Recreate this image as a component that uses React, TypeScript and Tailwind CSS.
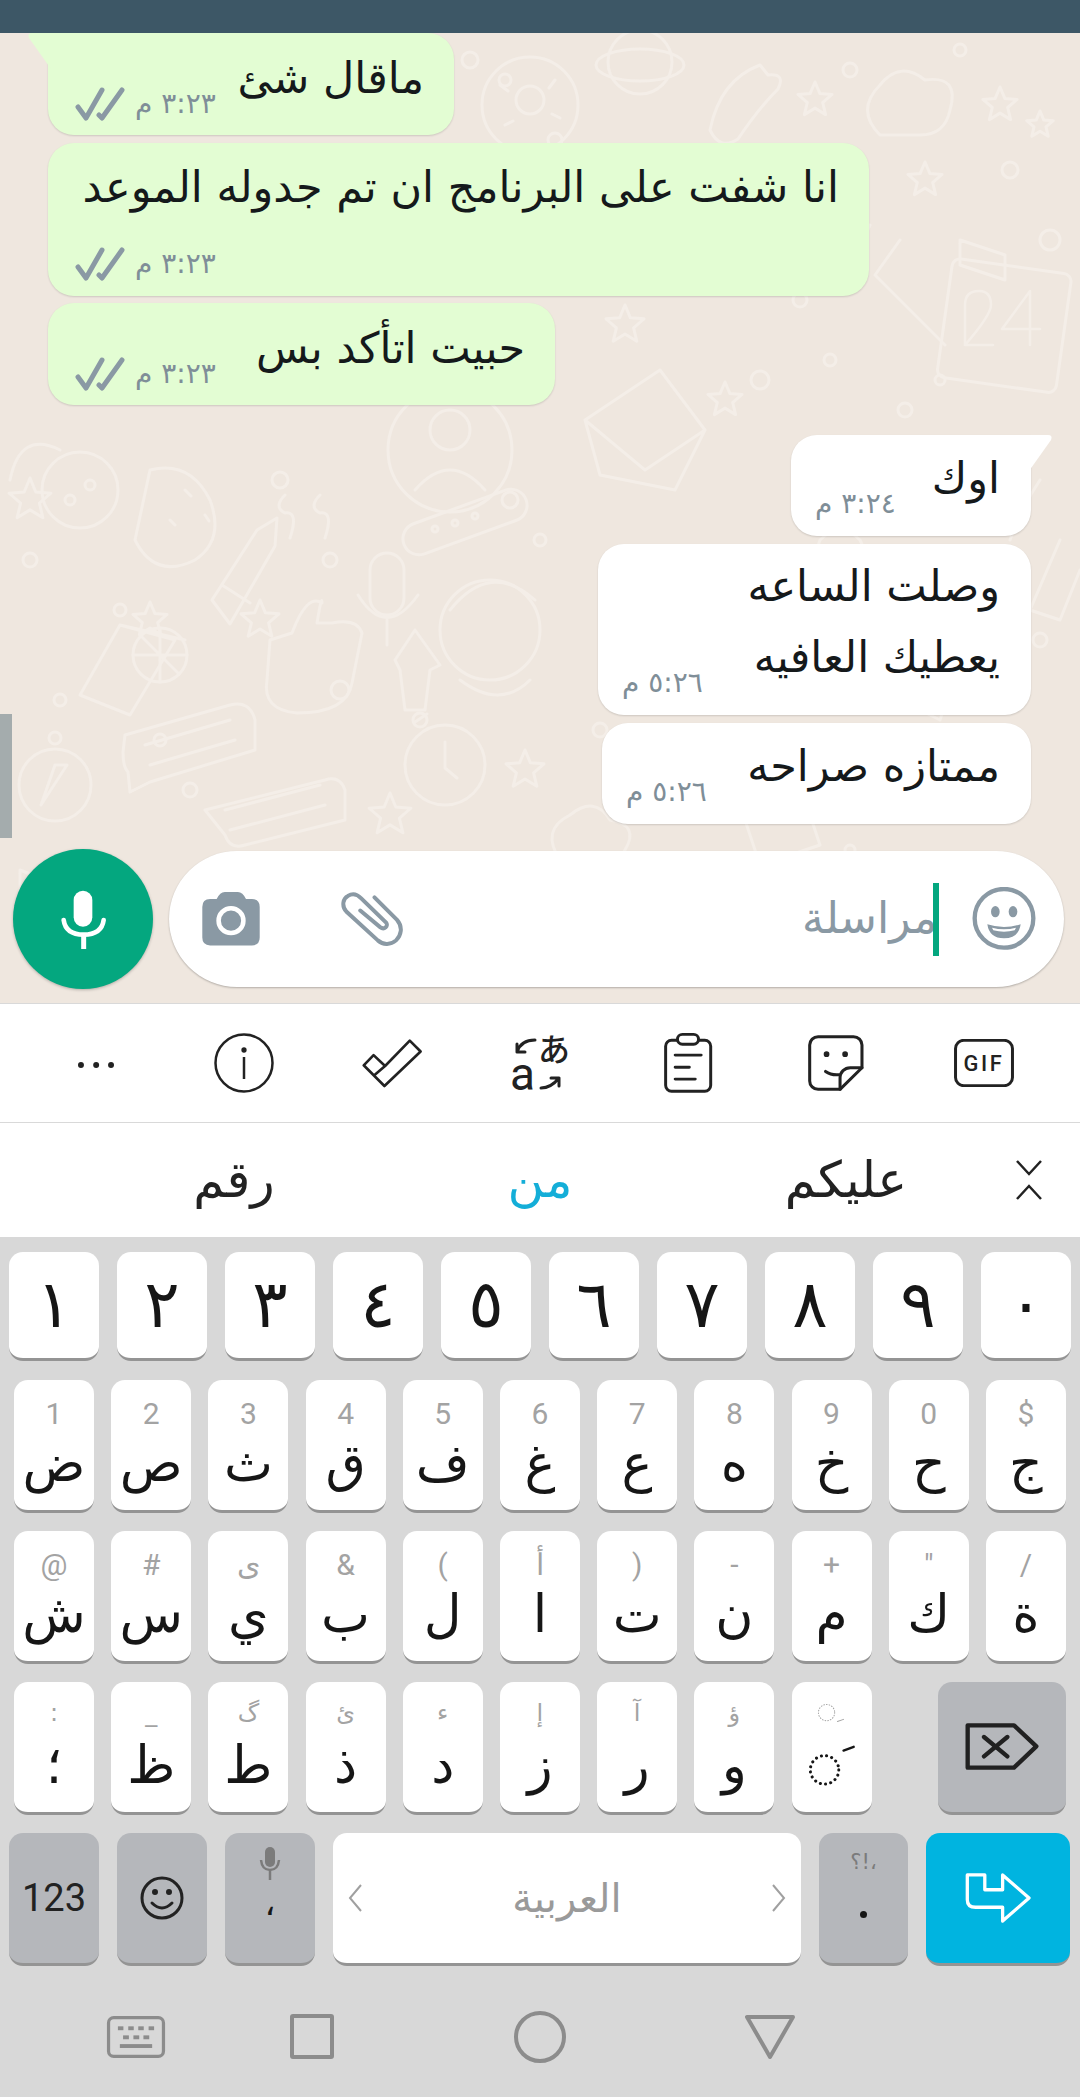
import React from 'react';

const arabic = "font-['DejaVu_Sans',sans-serif]";

// faint doodles behind the chat
const bubbles: [number, number, number][] = [
  [470, 60, 8], [505, 80, 6], [610, 200, 10], [690, 175, 7], [710, 220, 9], [665, 250, 6], [850, 70, 7], [960, 50, 6],
  [1010, 170, 8], [1050, 240, 10], [800, 300, 7], [830, 360, 6], [760, 380, 9], [905, 410, 7], [940, 380, 5], [555, 140, 7],
  [280, 480, 8], [330, 560, 7], [510, 500, 8], [540, 540, 6], [700, 560, 8], [735, 640, 9], [770, 660, 6], [420, 720, 7],
  [340, 690, 9], [160, 740, 6], [190, 790, 7], [120, 610, 6], [30, 560, 7], [60, 700, 6], [560, 880, 5], [600, 730, 7],
  [640, 800, 8], [680, 750, 6], [230, 900, 6], [850, 850, 5], [510, 900, 7], [90, 960, 6], [290, 950, 6], [1040, 640, 7],
];
const stars: [number, number, number][] = [
  [815, 100, 18], [1000, 105, 18], [925, 180, 18], [625, 325, 20], [150, 620, 18], [260, 620, 20], [525, 770, 20], [390, 815, 22], [725, 400, 18], [30, 500, 22], [1040, 125, 14],
];

function starPath(x: number, y: number, r: number) {
  const pts: string[] = [];
  for (let i = 0; i < 10; i++) {
    const a = (Math.PI / 5) * i - Math.PI / 2;
    const rr = i % 2 ? r * 0.45 : r;
    pts.push(`${(x + rr * Math.cos(a)).toFixed(1)},${(y + rr * Math.sin(a)).toFixed(1)}`);
  }
  return pts.join(' ');
}

const Doodles = () => (
  <svg className="absolute inset-0 w-full h-full" viewBox="0 33 1080 970" fill="none" stroke="#f4eee8" strokeWidth="3" strokeLinecap="round" strokeLinejoin="round">
    {bubbles.map(([x, y, r], i) => <circle key={i} cx={x} cy={y} r={r} />)}
    {stars.map(([x, y, r], i) => <polygon key={i} points={starPath(x, y, r)} />)}
    {/* planet */}
    <circle cx="640" cy="62" r="32" />
    <ellipse cx="640" cy="65" rx="44" ry="16" />
    {/* donut */}
    <circle cx="530" cy="105" r="48" />
    <circle cx="530" cy="100" r="14" />
    <path d="M500 85l8 6M555 80l-6 8M560 118l-8-4M505 125l8-4" />
    {/* hand, cloud */}
    <path d="M710 130q10-50 50-65l8 10q18-2 10 14q-20 20-40 50q-18 12-28-9z" />
    <path d="M880 135q-25-25 0-50q20-25 45-5q35-5 25 30q-5 25-30 25z" />
    {/* banana and drops */}
    <path d="M850 220q-15 30-20 60M870 225q-15 30-20 60" />
    {/* calendar 24 */}
    <rect x="945" y="265" width="120" height="120" rx="8" transform="rotate(8 1000 320)" />
    <path d="M965 345v-40q0-14 14-14q12 0 12 14q0 10-26 40h28M1030 345v-54l-28 38h38" strokeWidth="2.5" />
    <path d="M960 240l45 15v25l-45-15zM900 240l-25 35 70 70" />
    {/* envelope */}
    <path d="M585 420l75-50 45 60-30 60-75-15zM585 420l60 50 60-40" />
    {/* profile disc */}
    <circle cx="450" cy="450" r="62" />
    <circle cx="450" cy="430" r="20" />
    <path d="M415 490q35-40 70 0" />
    {/* cookie, bear */}
    <circle cx="80" cy="490" r="38" />
    <path d="M10 480q10-50 50-30M150 470q40-10 60 30q15 40-15 60q-40 20-60-20z" />
    <path d="M185 490l6 6M205 515l4 6M170 520l5 5" />
    <circle cx="90" cy="485" r="5" />
    <circle cx="70" cy="500" r="5" />
    {/* quotes */}
    <path d="M285 495q-12 12 0 18q14-2 5 25M320 495q-12 12 0 18q14-2 5 25" />
    {/* pill */}
    <rect x="400" y="506" width="130" height="32" rx="16" transform="rotate(-20 465 522)" />
    <circle cx="435" cy="529" r="3" />
    <circle cx="455" cy="523" r="3" />
    <circle cx="475" cy="516" r="3" />
    {/* pencil */}
    <path d="M212 600l45-70 20-12-2 28-45 78zM222 585l28 18" />
    {/* mic */}
    <rect x="370" y="553" width="34" height="62" rx="17" />
    <path d="M358 595q28 45 60 0M387 620v25" />
    {/* thumb */}
    <path d="M270 640l-3 40q-5 30 30 33q50 0 55-30l10-50q-5-15-30-10l-15 0q5-30 5-20q-15-10-30 30z" />
    {/* face */}
    <circle cx="490" cy="630" r="50" />
    <path d="M450 610q40-50 85-10M460 680q40 30 70 0" />
    {/* lemon slice */}
    <path d="M120 625l-40 70 50 20 45-75zM120 625l65 15" />
    <circle cx="160" cy="655" r="27" />
    <path d="M160 628v54M133 655h54M141 636l38 38" />
    {/* compass */}
    <circle cx="55" cy="785" r="36" />
    <circle cx="55" cy="738" r="6" />
    <path d="M67 765l-26 40 14-40 12 0z" />
    {/* chat cards */}
    <path d="M125 735l105-30q20-5 25 15l0 30-105 32-20 10-2-20q-5-5-5-20z" />
    <path d="M145 745l85-25M150 765l85-25" />
    <path d="M205 810l120-30q15-5 20 10l0 30-100 25q-15 5-20-10z" />
    <path d="M225 810l95-25M230 830l95-25" />
    {/* clock */}
    <circle cx="445" cy="765" r="40" />
    <path d="M445 742v26l12 10M415 722l12-8" />
    {/* cloud, phone, arrow */}
    <path d="M560 860q-20-30 10-45q25-20 40 5q30 5 15 30q-10 20-35 15z" />
    <path d="M395 660l20-30 25 35-10 5-5 40h-20l-5-40z" />
    <path d="M745 820l60-20 15 45-60 20zM20 870l50 20-10 30-40-20zM900 660q30-20 60 0l-20 60-40-20z" />
    <path d="M1040 480q-20 30-30 60M1060 540l-30 70 30 10 20-50M820 540q20-20 40 0q15 30-10 50q-30 10-40-20z" />
  </svg>
);

const Ticks = () => (
  <svg width="52" height="34" viewBox="0 0 52 34" fill="none" stroke="#8a99a4" strokeWidth="5" strokeLinecap="round" strokeLinejoin="round">
    <path d="M3 20l8 11L27 3M24 28l3 3L47 3" />
  </svg>
);

const Time = ({ t }: { t: string }) => (
  <span dir="rtl" className={`${arabic} text-[28px] leading-[30px] text-[#7f8e98] whitespace-nowrap`}>{t}</span>
);

const Tail = ({ right, fill }: { right?: boolean; fill: string }) => (
  <svg width="24" height="36" viewBox="0 0 24 36" className={right ? 'absolute top-0 -right-[22px]' : 'absolute top-0 -left-[21px]'} style={{ fill }}>
    <path d={right ? 'M0 0H19Q24 0 22 5L0 36Z' : 'M24 0H5Q0 0 2 5L24 36Z'} />
  </svg>
);

const TheirBubble = ({ text, w, tail }: { text: string; w: string; tail?: boolean }) => (
  <div className={`relative ${w} h-[102px] ml-[48px] bg-[#e3fdd3] rounded-[26px] shadow-[0_1px_2px_rgba(0,0,0,0.14)] flex items-start pl-[27px] pr-[30px] ${tail ? 'rounded-tl-none' : ''}`}>
    {tail && <Tail fill="#e3fdd3" />}
    <div className="flex items-center gap-[8px] mt-[54px]">
      <Ticks />
      <Time t="٣:٢٣ م" />
    </div>
    <div dir="rtl" className={`${arabic} flex-1 text-[43px] leading-[46px] text-[#15191b] whitespace-nowrap mt-[22px]`}>{text}</div>
  </div>
);

const MyBubble = ({ lines, time, w, h, tail }: { lines: string[]; time: string; w: string; h: string; tail?: boolean }) => (
  <div className={`relative self-end mr-[49px] ${w} ${h} bg-white rounded-[26px] shadow-[0_1px_2px_rgba(0,0,0,0.14)] flex justify-between items-end pl-[24px] pr-[31px] pb-[17px] ${tail ? 'rounded-tr-none' : ''}`}>
    {tail && <Tail right fill="#ffffff" />}
    <Time t={time} />
    <div dir="rtl" className={`${arabic} text-[43px] leading-[71px] text-[#15191b] whitespace-nowrap mb-[5px]`}>
      {lines.map(l => <div key={l}>{l}</div>)}
    </div>
  </div>
);

const Chat = () => (
  <div className="relative h-[970px] bg-[#efe7df] flex flex-col overflow-hidden">
    <Doodles />
    <div className="absolute left-0 top-[681px] w-[12px] h-[124px] bg-[#a4acad]" />
    <TheirBubble text="ماقال شئ" w="w-[406px]" tail />
    <div className="relative w-[821px] h-[153px] mt-[8px] ml-[48px] bg-[#e3fdd3] rounded-[26px] shadow-[0_1px_2px_rgba(0,0,0,0.14)] pl-[27px] pr-[30px] pt-[21px]">
      <div dir="rtl" className={`${arabic} text-[43px] leading-[46px] text-[#15191b] whitespace-nowrap`}>انا شفت على البرنامج ان تم جدوله الموعد</div>
      <div className="flex items-center gap-[8px] mt-[37px]">
        <Ticks />
        <Time t="٣:٢٣ م" />
      </div>
    </div>
    <div className="mt-[7px] flex"><TheirBubble text="حبيت اتأكد بس" w="w-[507px]" /></div>
    <div className="mt-[30px] flex flex-col">
      <MyBubble lines={['اوك']} time="٣:٢٤ م" w="w-[240px]" h="h-[101px]" tail />
      <div className="h-[8px]" />
      <MyBubble lines={['وصلت الساعه', 'يعطيك العافيه']} time="٥:٢٦ م" w="w-[433px]" h="h-[171px]" />
      <div className="h-[8px]" />
      <MyBubble lines={['ممتازه صراحه']} time="٥:٢٦ م" w="w-[429px]" h="h-[101px]" />
    </div>
    <div className="relative flex items-center mt-[25px] pl-[13px]">
      <div className="w-[140px] h-[140px] rounded-full bg-[#04a77f] shadow-[0_1px_3px_rgba(0,0,0,0.25)] flex items-center justify-center">
        <svg width="54" height="70" viewBox="170 130 160 210" fill="none" stroke="#ffffff" strokeLinecap="round">
          <rect x="222" y="150" width="56" height="108" rx="28" fill="#ffffff" stroke="none" />
          <path d="M192 238q6 44 60 44t60-44" strokeWidth="14" />
          <path d="M252 285v40" strokeWidth="15" strokeLinecap="butt" />
        </svg>
      </div>
      <div className="ml-[16px] w-[895px] h-[136px] rounded-[68px] bg-white shadow-[0_1px_2px_rgba(0,0,0,0.25)] flex items-center pl-[32px] pr-[28px]">
        <svg width="60" height="56" viewBox="602 148 184 170">
          <path fill="#8a99a4" d="M630 172h20q10-22 25-22h40q15 0 25 22h18q24 0 24 24v94q0 24-24 24H630q-24 0-24-24v-94q0-24 24-24z" />
          <circle cx="694" cy="238" r="38" fill="#8a99a4" stroke="#ffffff" strokeWidth="14" />
        </svg>
        <svg className="ml-[78px]" width="66" height="58" viewBox="1020 150 195 175" fill="none" stroke="#8a99a4" strokeWidth="12" strokeLinecap="round">
          <path d="M1125 172L1193 240C1212 262 1205 288 1190 302C1172 318 1150 315 1135 302L1040 215C1025 198 1030 175 1045 168C1060 158 1075 165 1085 175L1160 248C1168 258 1155 272 1142 262L1082 212" />
        </svg>
        <div className="flex-1 flex justify-end items-center">
          <span dir="rtl" className={`${arabic} text-[44px] leading-[46px] text-[#8a99a4] mr-[-4px] -mt-[3px]`}>مراسلة</span>
          <div className="w-[6px] h-[73px] bg-[#04a77f]" />
        </div>
        <svg className="ml-[33px]" width="64" height="64" viewBox="332 84 192 192">
          <circle cx="428" cy="178" r="88" fill="none" stroke="#8a99a4" strokeWidth="13" />
          <ellipse cx="402" cy="158" rx="13" ry="17" fill="#8a99a4" />
          <ellipse cx="455" cy="158" rx="13" ry="17" fill="#8a99a4" />
          <path d="M378 196Q428 212 478 196Q472 238 428 238Q384 238 378 196Z" fill="#8a99a4" />
          <path d="M392 206Q428 216 464 206L460 214Q428 222 396 214Z" fill="#ffffff" />
        </svg>
      </div>
    </div>
  </div>
);

const Toolbar = () => (
  <div className="h-[120px] bg-white border-y border-[#d9d9d9] flex items-center pl-[22px]">
    <div className="w-[148px] flex justify-center pt-[3px]">
      <svg width="38" height="10" viewBox="50 145 115 26" fill="#222222"><circle cx="62" cy="158" r="9" /><circle cx="108" cy="158" r="9" /><circle cx="153" cy="158" r="9" /></svg>
    </div>
    <div className="w-[148px] flex justify-center">
      <svg width="60" height="60" viewBox="0 0 60 60" fill="none" stroke="#222222" strokeWidth="2.5"><circle cx="30" cy="30" r="28.5" /><path d="M30 24v22" /><circle cx="30" cy="17" r="1.4" fill="#222222" /></svg>
    </div>
    <div className="w-[148px] flex justify-center">
      <svg width="62" height="50" viewBox="902 72 188 152" fill="none" stroke="#222222" strokeWidth="8" strokeLinejoin="round">
        <path d="M910 155L940 124L975 157L1050 80L1083 113L973 218ZM942 185L975 157" />
      </svg>
    </div>
    <div className="w-[148px] flex justify-center">
      <svg width="72" height="90" viewBox="-5 -16 72 90" fill="none" stroke="#222222" strokeWidth="3" strokeLinecap="round" strokeLinejoin="round">
        <text x="1" y="56" fontSize="46" fill="#222222" stroke="none" fontFamily="'Roboto', sans-serif">a</text>
        <text x="29" y="27" fontSize="32" fontWeight="500" fill="#222222" stroke="none" fontFamily="'Noto Sans CJK JP', sans-serif">あ</text>
        <path d="M26 6q-14 0-18 12M8 10v8h8M32 54q10 0 18-10M50 52v-8h-8" />
      </svg>
    </div>
    <div className="w-[148px] flex justify-center">
      <svg width="50" height="62" viewBox="308 66 152 186" fill="none" stroke="#222222" strokeWidth="9" strokeLinecap="round">
        <rect x="316" y="90" width="137" height="155" rx="18" />
        <rect x="352" y="72" width="64" height="30" rx="15" fill="#ffffff" />
        <path d="M345 135H424M345 172H388M345 208H406" />
      </svg>
    </div>
    <div className="w-[148px] flex justify-center">
      <svg width="56" height="56" viewBox="745 75 166 166" fill="none" stroke="#222222" strokeWidth="9" strokeLinejoin="round" strokeLinecap="round">
        <path d="M840 236H775a25 25 0 0 1-25-25V105a25 25 0 0 1 25-25H880a25 25 0 0 1 25 25V172Z" />
        <path d="M905 172H870a30 30 0 0 0-30 30V236M797 183Q815 196 842 192" />
        <circle cx="800" cy="132" r="4" fill="#222222" />
        <circle cx="855" cy="132" r="4" fill="#222222" />
      </svg>
    </div>
    <div className="w-[148px] flex justify-center">
      <svg width="60" height="48" viewBox="1182 86 180 145" fill="none">
        <rect x="1186" y="90" width="172" height="137" rx="25" stroke="#222222" strokeWidth="9" />
        <text x="1272" y="182" textAnchor="middle" fontSize="66" fontWeight="500" letterSpacing="8" fill="#222222" fontFamily="'Roboto', sans-serif">GIF</text>
      </svg>
    </div>
  </div>
);

const Suggestions = () => (
  <div className="h-[114px] bg-white flex items-center pl-[81px]">
    {[['رقم', 'text-[#222222]'], ['من', 'text-[#14aed8]'], ['عليكم', 'text-[#222222]']].map(([w, c]) => (
      <div key={w} dir="rtl" className={`${arabic} ${c} w-[306px] text-center text-[50px] leading-[60px]`}>{w}</div>
    ))}
    <svg className="ml-[17px]" width="26" height="40" viewBox="0 0 26 40" fill="none" stroke="#222222" strokeWidth="2.5"><path d="M1 1l12 13L25 1M1 39l12-13 12 13" /></svg>
  </div>
);

const Key = ({ main, sub, className = 'w-[80px]', small }: { main: React.ReactNode; sub?: string; className?: string; small?: boolean }) => (
  <div className={`${className} h-full bg-white rounded-[14px] border-b-[3px] border-[#949494] flex flex-col items-center ${arabic} overflow-hidden`}>
    <div className={`h-[50px] flex items-end justify-center text-[#a3a3a3] ${small ? 'text-[24px] leading-[28px] pb-[5px]' : "text-[30px] leading-[32px] font-['Roboto',sans-serif]"}`}>{sub}</div>
    <div className="text-[52px] leading-[66px] text-[#161616]">{main}</div>
  </div>
);

const numbers = ['١', '٢', '٣', '٤', '٥', '٦', '٧', '٨', '٩', '٠'];
const row2 = ['ض', 'ص', 'ث', 'ق', 'ف', 'غ', 'ع', 'ه', 'خ', 'ح', 'ج'];
const row2Sub = ['1', '2', '3', '4', '5', '6', '7', '8', '9', '0', '$'];
const row3 = ['ش', 'س', 'ي', 'ب', 'ل', 'ا', 'ت', 'ن', 'م', 'ك', 'ة'];
const row3Sub = ['@', '#', 'ى', '&', '(', 'أ', ')', '-', '+', '"', '/'];
const row4 = ['؛', 'ظ', 'ط', 'ذ', 'د', 'ز', 'ر', 'و'];
const row4Sub = [':', '_', 'گ', 'ئ', 'ء', 'إ', 'آ', 'ؤ'];

const Keyboard = () => (
  <div className="flex-1 bg-[#d8d8d8] pt-[15px]">
    <div className="h-[109px] flex gap-[18px] pl-[9px]">
      {numbers.map(n => (
        <div key={n} className={`w-[90px] h-full bg-white rounded-[14px] border-b-[3px] border-[#949494] flex items-center justify-center ${arabic} text-[66px] leading-[100px] text-[#161616]`}>{n}</div>
      ))}
    </div>
    <div className="h-[133px] mt-[19px] flex gap-[17.2px] pl-[14px]">
      {row2.map((k, i) => <Key key={k} main={k} sub={row2Sub[i]} />)}
    </div>
    <div className="h-[133px] mt-[18px] flex gap-[17.2px] pl-[14px]">
      {row3.map((k, i) => <Key key={k} main={k} sub={row3Sub[i]} />)}
    </div>
    <div className="h-[133px] mt-[18px] flex gap-[17.2px] pl-[14px]">
      {row4.map((k, i) => <Key key={k} main={k} sub={row4Sub[i]} small />)}
      <div className="w-[80px] h-full bg-white rounded-[14px] border-b-[3px] border-[#949494] flex items-start justify-center">
        <svg width="80" height="110" viewBox="38 8 236 324" fill="none" strokeLinecap="round">
          <circle cx="140" cy="98" r="24" stroke="#a3a3a3" strokeWidth="3" strokeDasharray="2 6" />
          <path d="M172 124l18-6" stroke="#a3a3a3" strokeWidth="3" />
          <circle cx="134" cy="267" r="42" stroke="#161616" strokeWidth="9" strokeDasharray="0.1 15.5" />
          <path d="M190 210l30-11" stroke="#161616" strokeWidth="7" />
        </svg>
      </div>
      <div className="w-[128px] h-full ml-[49px] bg-[#b5b7bb] rounded-[14px] border-b-[3px] border-[#949494] flex items-center justify-center">
        <svg width="76" height="50" viewBox="555 125 228 150" fill="none" stroke="#212121" strokeWidth="13" strokeLinejoin="round" strokeLinecap="round">
          <path d="M566 135H705L772 198L705 262H566ZM615 170L685 228M685 170L615 228" />
        </svg>
      </div>
    </div>
    <div className="h-[133px] mt-[18px] flex gap-[18px] pl-[9px]">
      <div className="w-[90px] h-full bg-[#b5b7bb] rounded-[14px] border-b-[3px] border-[#949494] flex items-center justify-center font-['Roboto',sans-serif] text-[38px] text-[#222222]">123</div>
      <div className="w-[90px] h-full bg-[#b5b7bb] rounded-[14px] border-b-[3px] border-[#949494] flex items-center justify-center">
        <svg width="44" height="44" viewBox="0 0 44 44" fill="none" stroke="#222222" strokeWidth="3" strokeLinecap="round">
          <circle cx="22" cy="22" r="20" />
          <path d="M12 27q10 10 20 0" />
          <circle cx="15" cy="16" r="1.5" fill="#222222" />
          <circle cx="29" cy="16" r="1.5" fill="#222222" />
        </svg>
      </div>
      <div className={`w-[90px] h-full bg-[#b5b7bb] rounded-[14px] border-b-[3px] border-[#949494] flex flex-col items-center pt-[13px] ${arabic}`}>
        <svg width="22" height="34" viewBox="0 0 22 34" fill="none" stroke="#7b7b7b" strokeWidth="2.5">
          <rect x="6" y="1" width="10" height="20" rx="5" fill="#7b7b7b" stroke="none" />
          <path d="M2 14q1 10 9 10t9-10M11 24v10" />
        </svg>
        <span className="text-[34px] leading-[40px] mt-[3px] text-[#161616]">،</span>
      </div>
      <div className={`w-[468px] h-full bg-white rounded-[14px] border-b-[3px] border-[#949494] flex items-center justify-between px-[15px] ${arabic} text-[#9a9a9a]`}>
        <svg width="14" height="28" viewBox="0 0 14 28" fill="none" stroke="#a0a0a0" strokeWidth="2"><path d="M13 1L2 14l11 13" /></svg>
        <span dir="rtl" className="text-[40px] leading-[46px]">العربية</span>
        <svg width="14" height="28" viewBox="0 0 14 28" fill="none" stroke="#a0a0a0" strokeWidth="2"><path d="M1 1l11 13L1 27" /></svg>
      </div>
      <div className={`w-[89px] h-full bg-[#b5b7bb] rounded-[14px] border-b-[3px] border-[#949494] flex flex-col items-center pt-[14px] ${arabic}`}>
        <span dir="rtl" className="text-[21px] leading-[30px] text-[#7b7b7b]">،!؟</span>
        <span className="w-[7px] h-[7px] mt-[34px] rounded-full bg-[#161616]" />
      </div>
      <div className="w-[144px] h-full bg-[#00b4e0] rounded-[14px] border-b-[3px] border-[#949494] flex items-center justify-center">
        <svg width="66" height="52" viewBox="558 574 200 152" fill="none" stroke="#ffffff" strokeWidth="10" strokeLinejoin="round">
          <path d="M565 580H618V625H672V580L752 650L672 720V678H590Q565 678 565 655Z" />
        </svg>
      </div>
    </div>
    <div className="h-[131px] flex items-center pl-[106px] pt-[10px]">
      <svg width="60" height="42" viewBox="18 73 180 130" fill="#8c8c8c">
        <rect x="23" y="78" width="170" height="120" rx="16" fill="none" stroke="#8c8c8c" strokeWidth="10" />
        <rect x="52" y="105" width="17" height="12" /><rect x="84" y="105" width="17" height="12" /><rect x="115" y="105" width="17" height="12" /><rect x="147" y="105" width="17" height="12" />
        <rect x="68" y="133" width="18" height="12" /><rect x="100" y="133" width="18" height="12" /><rect x="131" y="133" width="18" height="12" />
        <rect x="58" y="160" width="100" height="12" />
      </svg>
      <div className="ml-[124px] w-[44px] h-[45px] border-[4px] border-[#8c8c8c] rounded-[3px]" />
      <div className="ml-[180px] w-[52px] h-[52px] border-[4px] border-[#8c8c8c] rounded-full" />
      <svg className="ml-[178px]" width="52" height="46" viewBox="0 0 52 46" fill="none" stroke="#8c8c8c" strokeWidth="4" strokeLinejoin="round"><path d="M3 3H49L26 43Z" /></svg>
    </div>
  </div>
);

export default function App() {
  return (
    <div className="w-[1080px] h-[2097px] flex flex-col overflow-hidden">
      <div className="h-[33px] bg-[#3d5766]" />
      <Chat />
      <Toolbar />
      <Suggestions />
      <Keyboard />
    </div>
  );
}
